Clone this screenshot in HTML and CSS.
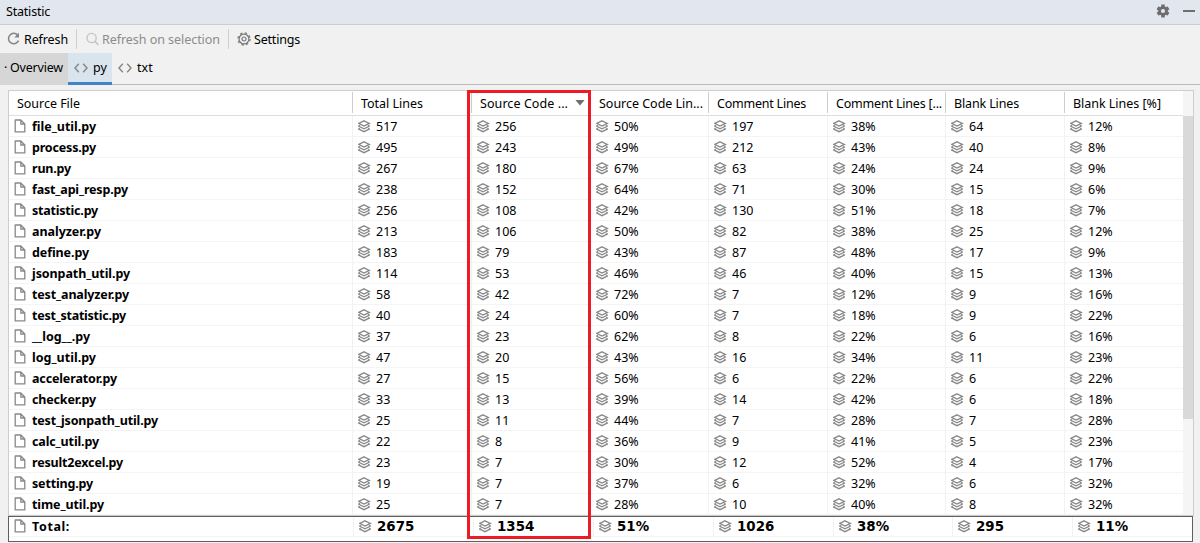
FILE: index.html
```html
<!DOCTYPE html>
<html lang="en">
<head>
<meta charset="utf-8">
<title>Statistic</title>
<link rel="stylesheet" href="styles.css">
</head>
<body>
<svg class="defs" width="0" height="0">
  <symbol id="stack" viewBox="0 0 13 13"><g fill="none" stroke="#888" stroke-width="1.3"><path d="M6 .8 11.4 3.4 6 6 .6 3.4z"/><path d="M.3 6 6 8.8 11.7 6M.3 8.9 6 11.7l5.7-2.8"/><path d="M.3 6l2-1M11.7 6l-2-1M.3 8.9l2-1M11.7 8.9l-2-1" stroke-width="1"/></g></symbol>
  <symbol id="file" viewBox="0 0 12 14"><path d="M1.2 1h5.6l4 4v7.9H1.2zM6.8 1v4h4" fill="none" stroke="#888" stroke-width="1.3" stroke-linejoin="round"/></symbol>
  <symbol id="code" viewBox="0 0 14 10"><path d="M4.8 .8 1 5l3.8 4.2M9.2 .8 13 5 9.2 9.2" fill="none" stroke="#858585" stroke-width="1.4"/></symbol>
</svg>
<header class="titlebar"><span class="title">Statistic</span>
  <svg class="gear" width="14" height="14" viewBox="-7 -7 14 14"><g fill="#6e6e6e"><circle r="4.7"/><path id="tooth" d="M-1.6-6.4h3.2l.5 2.6h-4.2zM-1.6 6.4h3.2l.5-2.6h-4.2z"/><use href="#tooth" transform="rotate(60)"/><use href="#tooth" transform="rotate(120)"/></g><circle r="2.1" fill="#e2e6ee"/></svg>
  <i class="minimize"></i>
</header>
<nav class="toolbar">
  <span class="tool refresh"><svg width="14" height="14" viewBox="0 0 14 14"><path d="M10.7 3.2A5.2 5.2 0 1 0 11.5 8.6" fill="none" stroke="#858585" stroke-width="1.5"/><path d="M12 .8v4.7H7.3z" fill="#858585"/></svg><b class="t-refresh">Refresh</b></span>
  <span class="tool selection"><svg width="14" height="14" viewBox="0 0 14 14"><circle cx="5.6" cy="6" r="4.6" fill="none" stroke="#c4c4c4" stroke-width="1.4"/><path d="m8.9 9.3 3.5 3.6" stroke="#c4c4c4" stroke-width="1.6"/></svg><b class="t-selection">Refresh on selection</b></span>
  <span class="tool settings"><svg width="14" height="14" viewBox="-7 -7 14 14"><g fill="none" stroke="#777"><circle r="4.9" stroke-width="1.2"/><circle r="6.1" stroke-width="1.2" stroke-dasharray="2.4 2.39"/><circle r="2" stroke-width="1.2"/></g></svg><b class="t-settings">Settings</b></span>
</nav>
<nav class="tabs">
  <span class="tab overview"><i>·</i><b>Overview</b></span>
  <span class="tab active"><svg width="14" height="10"><use href="#code"/></svg><b>py</b></span>
  <span class="tab"><svg width="14" height="10"><use href="#code"/></svg><b>txt</b></span>
</nav>
<main class="panel">
  <div class="grid head" id="head"></div>
  <div class="scroller"><div id="rows"></div></div>
  <div class="scrollbar"><i></i></div>
  <div class="selected-column"></div>
</main>
<footer class="total"><div class="grid" id="total"></div></footer>
<script src="table.js"></script>
</body>
</html>
```
FILE: styles.css
```css
* { box-sizing: border-box; }
body { margin: 0; width: 1200px; height: 543px; overflow: hidden; background: #f1f1f1; color: #000; font: 12.5px/20px "Noto Sans", sans-serif; display: flex; flex-direction: column; position: relative; }
svg { flex: none; display: block; }
b { font-weight: 400; white-space: nowrap; }
.defs { position: absolute; }
.titlebar { height: 25px; flex: none; background: #e2e6ee; border-bottom: 1px solid #cdcdcd; display: flex; align-items: center; padding: 0 5px 2px 6px; }
.title { flex: 1; padding-top: 2px; letter-spacing: -.2px; }
.gear { margin-right: 13px; }
.minimize { width: 12px; height: 2px; background: #6e6e6e; }
.toolbar { height: 28px; flex: none; display: flex; align-items: center; }
.tool { height: 20px; display: flex; align-items: center; gap: 4px; }
.tool b { padding-top: 2px; }
.tool + .tool { border-left: 1px solid #d0d0d0; }
.refresh { width: 76px; padding-left: 7px; gap: 3px; }
.selection { width: 152px; padding-left: 9px; gap: 2px; color: #8c8c8c; }
.settings { padding-left: 8px; gap: 3px; }
.tabs { height: 32px; flex: none; display: flex; border-bottom: 1px solid #bcbcbc; }
.tab { height: 32px; display: flex; align-items: center; gap: 5px; padding: 0 6px 2px; }
.overview { width: 68px; background: #d6d6d6; padding: 0 0 2px 4px; gap: 2px; }
.overview i { font-style: normal; width: 4px; }
.active { width: 44px; background: #dae4ed; border-bottom: 3px solid #4083c9; padding-bottom: 0; }
.panel { position: relative; flex: none; width: 1186px; height: 426px; margin: 5px 0 0 8px; background: #fff; border: 1px solid #cdcdcd; display: grid; grid-template: 25px 1fr / 1174px 10px; }
.grid { display: grid; grid-template-columns: 343px 119px 119px 118px 119px 118px 119px 119px; }
.cell { display: flex; align-items: center; min-width: 0; border-left: 1px solid #f2f2f2; padding-left: 5px; gap: 5px; line-height: 18px; }
.cell:first-child { border-left: 0; }
.head { border-bottom: 1px solid #dedede; padding: 1px 0 2px; height: 25px; }
.head .cell { border-left-color: #cdcdcd; padding-left: 8px; }
.head b, .row b { padding-top: 2px; }
.row { height: 21px; grid-auto-rows: 21px; }
.row .cell, .total .cell { border-bottom: 1px solid #f4f4f4; }
.row .name, .total .name { padding-left: 5px; gap: 6px; }
.name b { font-weight: 700; }
.scrollbar { grid-column: 2; grid-row: 1 / 3; background: #f5f5f5; padding-top: 25px; }
.scrollbar i { display: block; height: 303px; background: #d9d9d9; }
.sort { margin-left: auto; margin-right: 5px; width: 10px; height: 6px; background: #6e6e6e; clip-path: polygon(0 0, 100% 0, 50% 100%); }
.selected-column { position: absolute; left: 458px; top: -1px; width: 124px; height: 449px; border: 3px solid #ed1c24; z-index: 2; }
.total { flex: none; width: 1185px; height: 26px; margin-left: 8px; background: #fff; border: 1px solid #5f5f5f; }
.total .grid { grid-template-columns: 344px 120px 120px 120px 120px 119px 120px 120px; grid-auto-rows: 20px; height: 20px; overflow: hidden; }
.total .cell { padding-bottom: 1px; }
.total b { padding-top: 2px; }
.total .name b { line-height: 16px; }
.total .value b { font: 700 13.4px/16px "DejaVu Sans", sans-serif; }
```
FILE: table.js
```js
const headings = ["Source File", "Total Lines", "Source Code ...", "Source Code Lin...", "Comment Lines", "Comment Lines [...", "Blank Lines", "Blank Lines [%]"];
const headingWidths = [63, 62, 88, 104, 89, 106, 65, 88];
const data = `file_util.py 517 256 50% 197 38% 64 12% 64
process.py 495 243 49% 212 43% 40 8% 64
run.py 267 180 67% 63 24% 24 9% 39
fast_api_resp.py 238 152 64% 71 30% 15 6% 96
statistic.py 256 108 42% 130 51% 18 7% 66
analyzer.py 213 106 50% 82 38% 25 12% 69
define.py 183 79 43% 87 48% 17 9% 57
jsonpath_util.py 114 53 46% 46 40% 15 13% 98
test_analyzer.py 58 42 72% 7 12% 9 16% 97
test_statistic.py 40 24 60% 7 18% 9 22% 94
__log__.py 37 23 62% 8 22% 6 16% 58
log_util.py 47 20 43% 16 34% 11 23% 64
accelerator.py 27 15 56% 6 22% 6 22% 85
checker.py 33 13 39% 14 42% 6 18% 64
test_jsonpath_util.py 25 11 44% 7 28% 7 28% 126
calc_util.py 22 8 36% 9 41% 5 23% 67
result2excel.py 23 7 30% 12 52% 4 17% 91
setting.py 19 7 37% 6 32% 6 32% 61
time_util.py 25 7 28% 10 40% 8 32% 72`.split("\n").map(line => line.split(" "));

const icon = (id, w, h) => `<svg width="${w}" height="${h}"><use href="#${id}"/></svg>`;
const cells = (values, width) => values.map((v, i) => i
  ? `<div class="cell value">${icon("stack", 13, 13)}<b>${v}</b></div>`
  : `<div class="cell name">${icon("file", 12, 14)}<b data-width="${width}">${v}</b></div>`).join("");

document.getElementById("head").innerHTML = headings.map((h, i) =>
  `<div class="cell"><b data-width="${headingWidths[i]}">${h}</b>${i === 2 ? '<i class="sort"></i>' : ""}</div>`).join("");
document.getElementById("rows").innerHTML = data.map(r => `<div class="grid row">${cells(r.slice(0, 8), r[8])}</div>`).join("");
document.getElementById("total").innerHTML = cells(["Total:", "2675", "1354", "51%", "1026", "38%", "295", "11%"], 38);

const labelWidths = { ".t-refresh": 44, ".t-selection": 118, ".t-settings": 46, ".overview b": 53 };
for (const [selector, width] of Object.entries(labelWidths)) document.querySelector(selector).dataset.width = width;

for (const el of document.querySelectorAll("[data-width]")) {
  const range = document.createRange();
  range.selectNodeContents(el);
  const natural = range.getBoundingClientRect().width;
  el.style.letterSpacing = (el.dataset.width - natural) / el.textContent.length + "px";
}
```
